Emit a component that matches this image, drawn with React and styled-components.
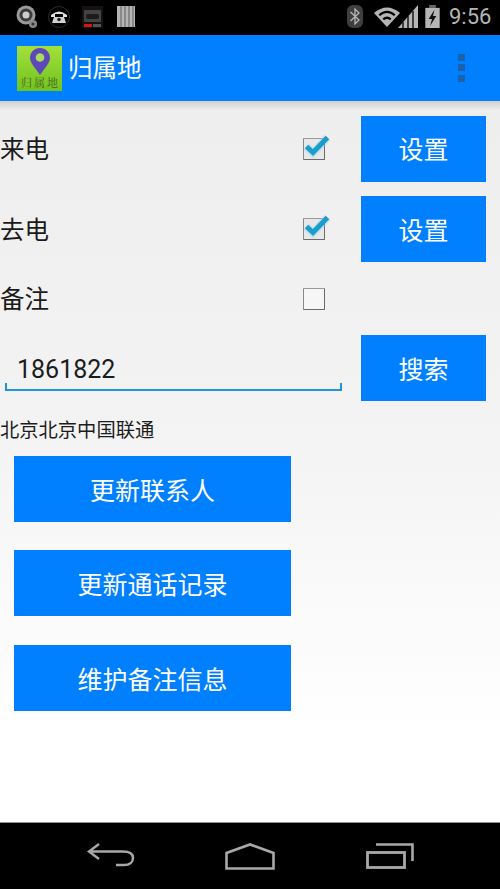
import React from 'react';
import styled, { createGlobalStyle } from 'styled-components';

const Global = createGlobalStyle`
  html, body { margin: 0; padding: 0; background: #000; }
  * { box-sizing: border-box; }
  body { font-family: "Noto Sans CJK SC", "Roboto", sans-serif; }
`;
const CJK = `"Noto Sans CJK SC", "Noto Sans CJK JP", sans-serif`;
const Screen = styled.div`
  width: 500px; height: 889px; display: flex; flex-direction: column; overflow: hidden;
`;
const StatusBar = styled.div`
  height: 35px; flex: none; background: #000; display: flex; align-items: center; padding: 0 0 2px 16px;
`;
const Notifs = styled.div`display: flex; align-items: center; flex: 1;`;
const NotifIcon = styled.svg`flex: none; margin-right: ${p => p.$mr || 0}px; margin-left: ${p => p.$ml || 0}px;`;
const StatusTime = styled.span`
  font-family: Roboto, sans-serif; font-size: 22px; color: #b5b5b5; width: 51px; margin-left: 9px; white-space: nowrap;
`;
const AppBar = styled.header`
  height: 66px; flex: none; background: #007fff; display: flex; align-items: center; padding-left: 17px; position: relative; z-index: 1;
`;
const Logo = styled.div`
  width: 45px; height: 45px; background: linear-gradient(180deg, #a4e03c 0%, #6fc31e 100%); display: flex; flex-direction: column; align-items: center;
`;
const Pin = styled.svg`margin-top: 2px; flex: none;`;
const LogoText = styled.span`
  font-family: "Noto Serif CJK SC", ${CJK}; font-size: 11px; line-height: 12px; color: #4f5d2b; letter-spacing: 2px; margin-top: 1px; white-space: nowrap; margin-right: -2px;
`;
const Title = styled.h1`
  margin: 0 0 2px 6px; font: 400 24.5px/1 ${CJK}; color: #fff; flex: 1;
`;
const Overflow = styled.div`
  display: flex; flex-direction: column; gap: 3.5px; margin-right: 35px; margin-bottom: 1px;
`;
const Dot = styled.i`display: block; width: 7px; height: 7px; background: #1a62ac;`;
const Main = styled.main`
  flex: 1; padding-top: 14px; display: flex; flex-direction: column;
  background: linear-gradient(180deg, #eeeeee 0%, #f3f3f3 45%, #ffffff 88%);
  position: relative;
  &::before { content: ""; position: absolute; left: 0; right: 0; top: 0; height: 9px; background: linear-gradient(180deg, rgba(0,0,0,.13), rgba(0,0,0,0)); }
`;
const Row = styled.div`
  height: ${p => p.$h}px; margin-bottom: ${p => p.$mb || 0}px; display: flex; align-items: center; padding-right: 14px;
`;
const Label = styled.span`
  width: 303px; font: 400 24.5px/1 ${CJK}; color: #1a1a1a; flex: none;
`;
const Check = styled.div`
  width: 22px; height: 22px; flex: none; border: 1.5px solid #6b6b6b; border-top-color: #9a9a9a; border-left-color: #888; border-radius: 1px; position: relative; margin-right: 36px;
  background: ${p => p.$on ? '#e8e8e8' : '#f6f6f6'};
`;
const CheckMark = styled.svg`position: absolute; left: 1px; top: -7px; overflow: visible;`;
const BlueButton = styled.button`
  border: 0; margin: 0; padding: 0; background: #007fff; color: #fff; font: 400 25px/1 ${CJK};
  width: ${p => p.$w}px; height: 66px; flex: none;
`;
const InputWrap = styled.div`
  width: 337px; margin-left: 5px; margin-right: 19px; height: 56px; flex: none; position: relative; display: flex; align-items: center; padding: 14px 0 0 12px; align-self: flex-start;
  font: 400 25px/1 Roboto, sans-serif; color: #1c1c1c;
  border-bottom: 2px solid #1f97d3;
  &::before, &::after { content: ""; position: absolute; bottom: 0; width: 2px; height: 6px; background: #1f97d3; }
  &::before { left: 0; } &::after { right: 0; }
`;
const Result = styled.div`
  margin-top: 16px; height: 25px; font: 400 19.3px/24px ${CJK}; color: #1c1c1c;
`;
const Actions = styled.div`
  margin-top: 14px; padding-left: 14px; display: flex; flex-direction: column; gap: 28px;
  & > :last-child { margin-top: 1px; }
`;
const NavBar = styled.nav`
  height: 67px; flex: none; background: #000; border-top: 1px solid #8f8f8f; display: flex; align-items: center;
  padding-left: 87px;
`;
const NavIcon = styled.svg`flex: none; margin-right: ${p => p.$mr}px;`;

const Tick = () => (
  <CheckMark width="26" height="24" viewBox="0 0 26 24">
    <path d="M1.500 14.500 L8 21 L22.500 5.500" fill="none" stroke="#8fd6ee" strokeWidth="8" opacity=".4" />
    <path d="M1.500 14.500 L8 20.500 L22.500 5.500" fill="none" stroke="#1c9ccb" strokeWidth="5" />
  </CheckMark>
);

const App = () => (
  <Screen>
    <Global />
    <StatusBar>
      <Notifs>
        <NotifIcon $mr={10} width="22" height="24" viewBox="0 0 22 24">
          <circle cx="10" cy="10" r="9.500" fill="#9a9a9a" />
          <circle cx="10" cy="10" r="6.500" fill="#3a3a3a" />
          <circle cx="10" cy="10" r="3.500" fill="#ccc" />
          <circle cx="17" cy="19" r="4" fill="#888" />
          <circle cx="17" cy="19" r="1.500" fill="#333" />
        </NotifIcon>
        <NotifIcon $mr={12} width="22" height="22" viewBox="0 0 22 22">
          <circle cx="11" cy="11" r="10.500" fill="none" stroke="#2a2a2a" />
          <path d="M3 9 Q11 2 19 9 L19 11 L15 11 L15 8 L7 8 L7 11 L3 11Z" fill="#e0e0e0" />
          <path d="M6 11 L16 11 L18 17 L4 17Z" fill="#d0d0d0" />
          <circle cx="11" cy="13.500" r="1.800" fill="#222" />
        </NotifIcon>
        <NotifIcon $mr={14} width="21" height="22" viewBox="0 0 21 22">
          <rect width="21" height="22" fill="#161212" />
          <rect x="2" y="4" width="17" height="12" fill="#444" />
          <rect x="4" y="8" width="13" height="5" rx="2" fill="#1c1c1c" />
          <rect x="2" y="18" width="8" height="3" fill="#d01616" />
          <rect x="11" y="18" width="8" height="3" fill="#555" />
        </NotifIcon>
        <NotifIcon width="18" height="21" viewBox="0 0 18 21">
          <rect width="18" height="21" fill="#b4b4b4" />
          <path d="M4 0V21M8 0V21M12 0V21M16 0V21" stroke="#5e5e5e" strokeWidth="1" />
        </NotifIcon>
      </Notifs>
      <NotifIcon $mr={11} width="16" height="23" viewBox="0 0 16 23">
        <rect width="16" height="23" rx="6" fill="#3e3e3e" />
        <path d="M3.500 7 L12 15 L8 19 L8 4 L12 8 L3.500 16" fill="none" stroke="#b5b5b5" strokeWidth="1.300" />
      </NotifIcon>
      <NotifIcon $mr={5} width="46" height="23" viewBox="0 0 46 23">
        <path d="M0 8 Q13 -3 26 8 L13 22Z" fill="#b5b5b5" />
        <path d="M4.500 9.500 Q13 2 21.500 9.500 L20 11 Q13 5 6 11Z" fill="#000" />
        <path d="M8.500 13.500 Q13 9.500 17.500 13.500 L16 15.200 Q13 12.600 10 15.200Z" fill="#000" />
        <path d="M24 23 L44 0 L44 23Z" fill="#b5b5b5" />
        <path d="M29 23V17M34 23V11M39 23V6" stroke="#000" strokeWidth="1.300" />
      </NotifIcon>
      <NotifIcon width="15" height="23" viewBox="0 0 15 24">
        <rect x="4" y="0" width="7" height="3" fill="#666" />
        <rect x="0" y="3" width="15" height="21" fill="#b5b5b5" />
        <path d="M9.500 5 L3.500 14.500 L7 14.500 L5 22 L11.500 11.500 L8 11.500Z" fill="#111" />
      </NotifIcon>
      <StatusTime>9:56</StatusTime>
    </StatusBar>
    <AppBar>
      <Logo>
        <Pin width="20" height="27" viewBox="0 0 20 27">
          <path d="M10 0 C4 0 0 4.500 0 10 C0 15 6 21 10 27 C14 21 20 15 20 10 C20 4.500 16 0 10 0Z" fill="#5e48b8" />
          <circle cx="10" cy="9.500" r="4.300" fill="#a8dc5a" />
        </Pin>
        <LogoText>归属地</LogoText>
      </Logo>
      <Title>归属地</Title>
      <Overflow><Dot /><Dot /><Dot /></Overflow>
    </AppBar>
    <Main>
      <Row $h={67} $mb={14}>
        <Label>来电</Label>
        <Check $on><Tick /></Check>
        <BlueButton $w={125}>设置</BlueButton>
      </Row>
      <Row $h={66}>
        <Label>去电</Label>
        <Check $on><Tick /></Check>
        <BlueButton $w={125}>设置</BlueButton>
      </Row>
      <Row $h={73}>
        <Label>备注</Label>
        <Check />
      </Row>
      <Row $h={66}>
        <InputWrap>1861822</InputWrap>
        <BlueButton $w={125}>搜索</BlueButton>
      </Row>
      <Result>北京北京中国联通</Result>
      <Actions>
        <BlueButton $w={277}>更新联系人</BlueButton>
        <BlueButton $w={277}>更新通话记录</BlueButton>
        <BlueButton $w={277}>维护备注信息</BlueButton>
      </Actions>
    </Main>
    <NavBar>
      <NavIcon $mr={90} width="48" height="26" viewBox="0 0 48 26">
        <path d="M12 1 L2 8.500 L12 16 M2 8.500 H36 C44 8.500 46 12 46 15 C46 19 43 22 37 22 H29" fill="none" stroke="#a8a8a8" strokeWidth="2.500" />
      </NavIcon>
      <NavIcon $mr={91} width="50" height="27" viewBox="0 0 50 27">
        <path d="M1.500 25.500 V10 L25 1.500 L48.500 10 V25.500Z" fill="none" stroke="#a8a8a8" strokeWidth="2.600" />
      </NavIcon>
      <NavIcon $mr={0} width="48" height="26" viewBox="0 0 48 26">
        <path d="M10 1.500 H46.500 V18" fill="none" stroke="#a8a8a8" strokeWidth="2.600" />
        <rect x="1.500" y="9.500" width="37" height="15" fill="none" stroke="#a8a8a8" strokeWidth="2.800" />
      </NavIcon>
    </NavBar>
  </Screen>
);

export default App;
